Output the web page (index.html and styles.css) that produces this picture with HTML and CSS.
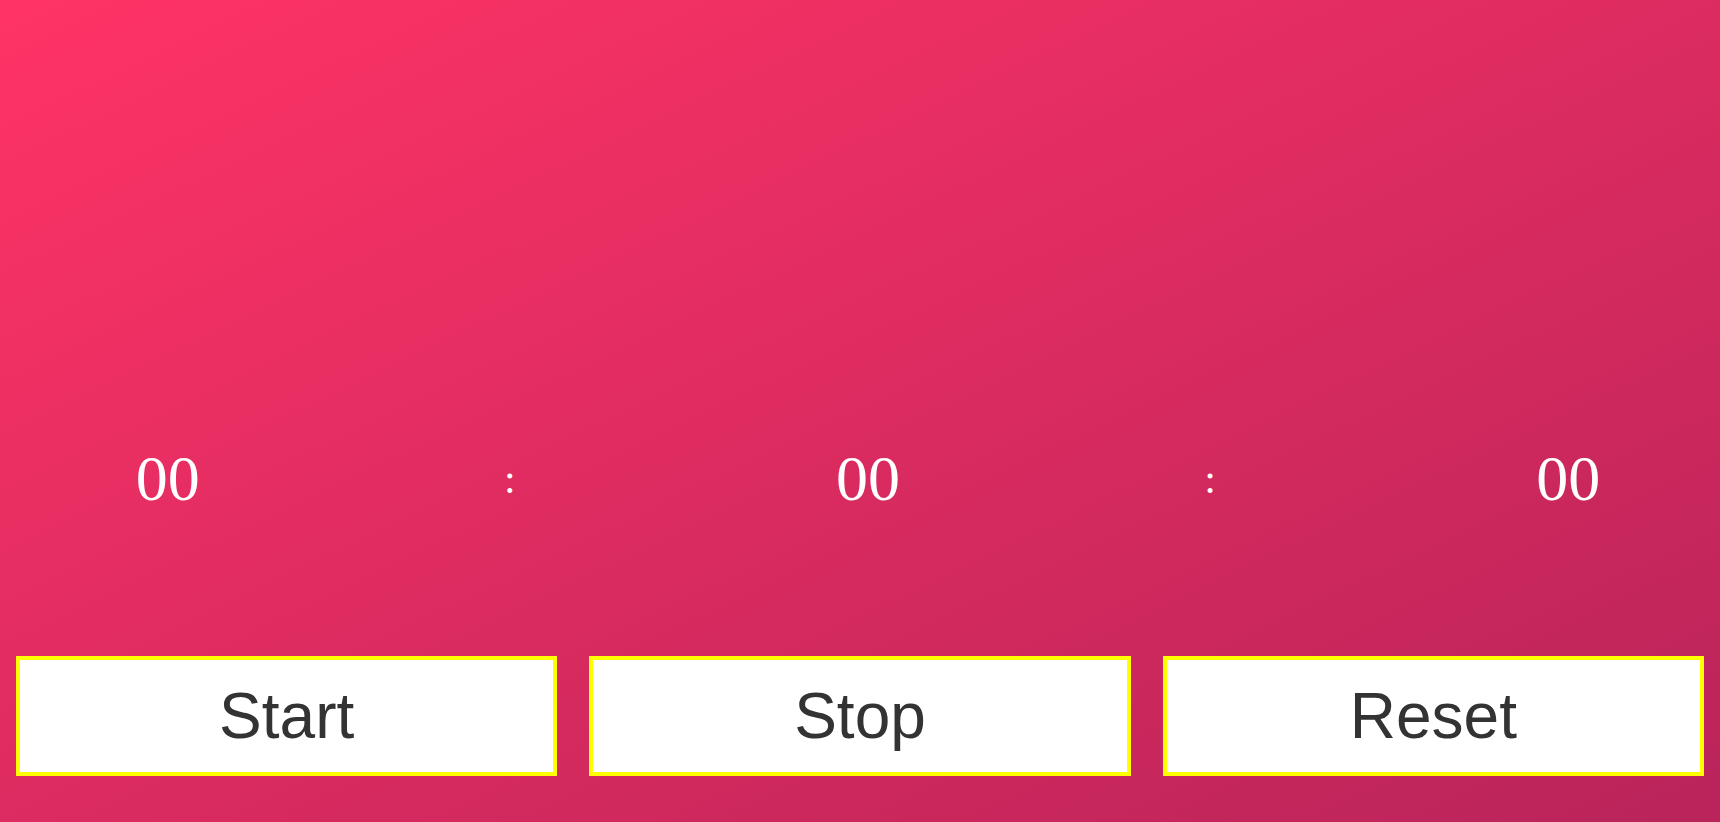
FILE: index.html
```html
<!DOCTYPE html>
<html lang="en">
<head>
<meta charset="utf-8">
<title>Stopwatch</title>
<link rel="stylesheet" href="styles.css">
</head>
<body>
<main class="stopwatch">
  <div class="display">
    <span class="digits">00</span>
    <span class="sep">:</span>
    <span class="digits">00</span>
    <span class="sep">:</span>
    <span class="digits">00</span>
  </div>
  <div class="controls">
    <button class="btn" type="button">Start</button>
    <button class="btn" type="button">Stop</button>
    <button class="btn" type="button">Reset</button>
  </div>
</main>
</body>
</html>
```

FILE: styles.css
```css
html, body {
  margin: 0;
  height: 100%;
}

body {
  background: linear-gradient(to bottom right, #ff3366 0%, #b9245a 100%);
  font-family: "Liberation Serif", "Times New Roman", serif;
}

.stopwatch {
  height: 100%;
  box-sizing: border-box;
  display: flex;
  flex-direction: column;
  justify-content: flex-end;
  padding-bottom: 46px;
}

.display {
  display: flex;
  justify-content: space-around;
  align-items: center;
  padding-left: 16px;
  margin-bottom: 140px;
  color: #ffffff;
}

.digits {
  font-size: 64px;
}

.sep {
  font-size: 42px;
  width: 157px;
  padding-right: 16px;
  box-sizing: border-box;
  text-align: center;
}

.controls {
  display: flex;
  gap: 32px;
  padding: 0 16px;
}

.btn {
  flex: 1;
  min-width: 0;
  height: 120px;
  padding: 0;
  margin: 0;
  background: #ffffff;
  border: 4px solid #ffff00;
  border-radius: 0;
  color: #333333;
  font-family: "Liberation Sans", Arial, sans-serif;
  font-size: 64px;
}
```
